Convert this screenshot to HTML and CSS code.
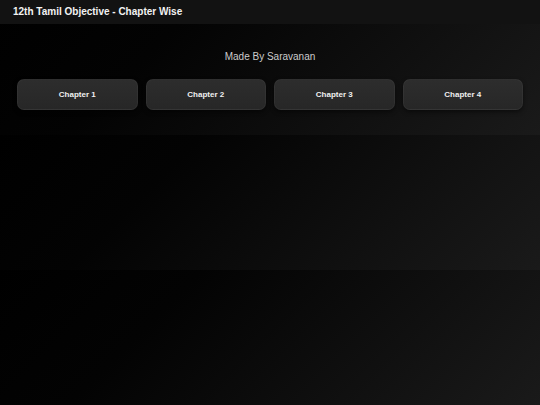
FILE: index.html
```html
<!DOCTYPE html>
<html lang="en">
<head>
<meta charset="utf-8">
<title>12th Tamil Objective - Chapter Wise</title>
<link rel="stylesheet" href="styles.css">
</head>
<body>
<header class="topbar">
  <h1 class="title">12th Tamil Objective - Chapter Wise</h1>
</header>
<main class="content">
  <p class="credit">Made By Saravanan</p>
  <div class="chapters">
    <button class="chapter">Chapter 1</button>
    <button class="chapter">Chapter 2</button>
    <button class="chapter">Chapter 3</button>
    <button class="chapter">Chapter 4</button>
  </div>
</main>
</body>
</html>
```

FILE: styles.css
```css
html {
  margin: 0;
}
body {
  margin: 0;
  font-family: "Liberation Sans", Arial, sans-serif;
  background: linear-gradient(135deg, #000000 0%, #030303 30%, #1a1a1a 100%);
  color: #fff;
}
.topbar {
  background: #121212;
  height: 24px;
  padding: 0 13px;
  display: flex;
  align-items: center;
}
.title {
  margin: 0;
  font-size: 10px;
  font-weight: bold;
  color: #f2f2f2;
  line-height: 24px;
}
.content {
  padding: 26px 17px 25px;
}
.credit {
  margin: 0 0 15px;
  text-align: center;
  font-size: 10px;
  line-height: 14px;
  color: #cccccc;
}
.chapters {
  display: grid;
  grid-template-columns: repeat(4, 1fr);
  gap: 8px;
}
.chapter {
  height: 31px;
  border-radius: 7px;
  border: 1px solid rgba(255, 255, 255, 0.04);
  background: linear-gradient(180deg, #2d2d2d, #272727);
  color: #f0f0f0;
  font-family: "Liberation Sans", Arial, sans-serif;
  font-size: 8px;
  font-weight: bold;
  box-shadow: 0 2px 4px rgba(0, 0, 0, 0.5);
  padding: 0;
}
```
